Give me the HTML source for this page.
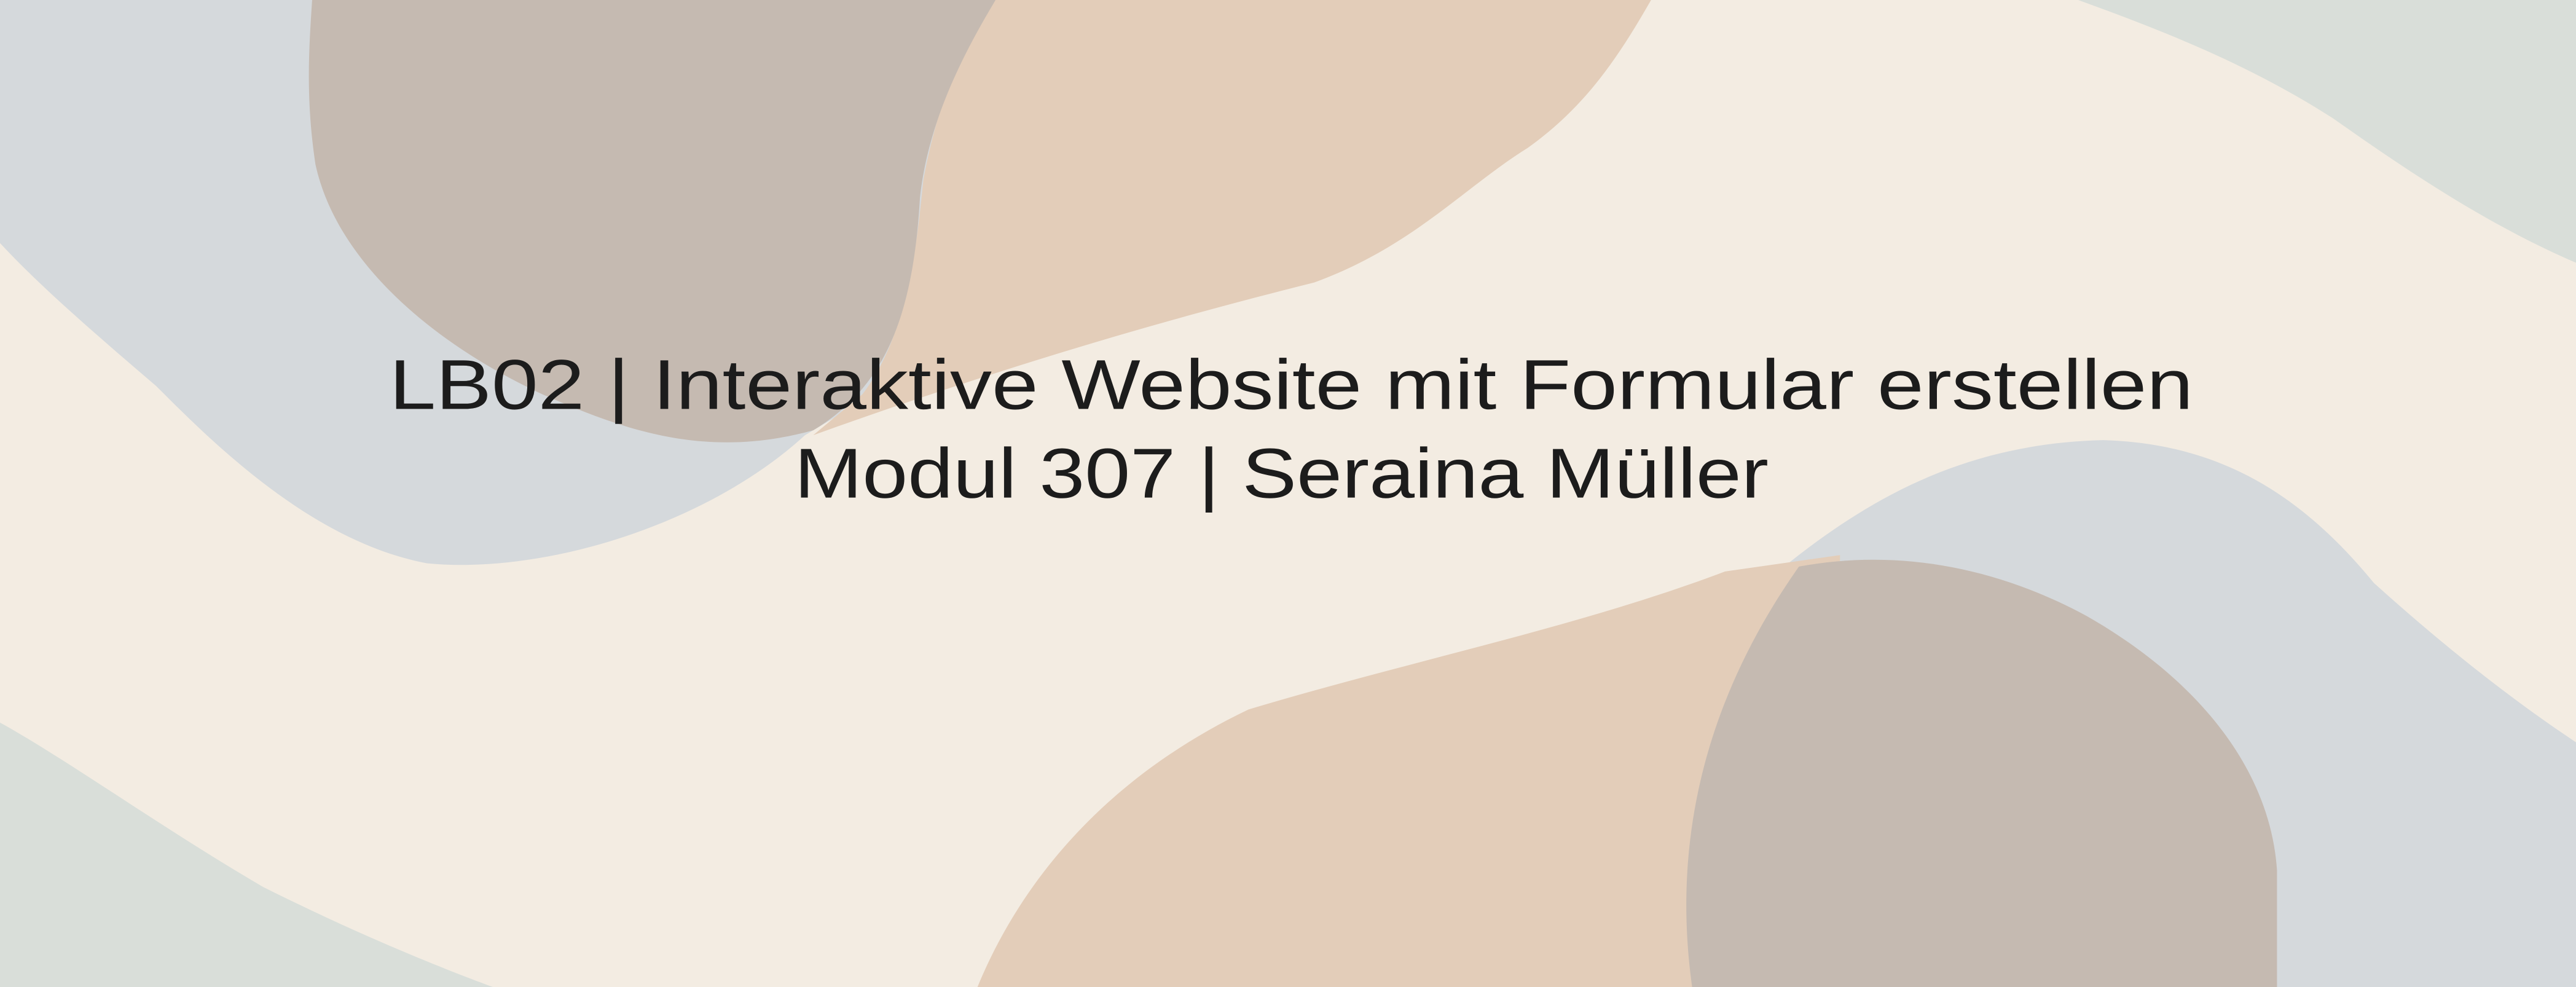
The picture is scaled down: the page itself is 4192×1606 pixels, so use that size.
<!DOCTYPE html>
<html><head><meta charset="utf-8"><style>
html,body{margin:0;padding:0;width:4192px;height:1606px;overflow:hidden;background:#f3ece2}
svg{display:block}
</style></head><body>
<svg width="4192" height="1606" viewBox="0 0 1568 601" preserveAspectRatio="none" xmlns="http://www.w3.org/2000/svg">
<rect width="1568" height="601" fill="#f3ece2"/>
<path d="M1265,0 L1568,0 L1568,160 C1510,135 1460,100 1420,72 C1370,40 1320,20 1265,0 Z" fill="#d9ded9"/>
<path d="M0,0 L620,0 L600,200 L490,265 C430,320 330,350 260,343 C190,330 130,270 95,235 C60,205 25,175 0,148 Z" fill="#d5d9dc"/>
<path d="M600,0 L1005,0 C985,35 965,65 930,90 C890,115 860,150 800,172 C720,192 620,220 495,265 L525,240 C552,205 558,150 562,110 C570,65 585,30 600,0 Z" fill="#e3cdb9"/>
<path d="M190,0 L606,0 C585,35 565,75 560,120 C556,190 540,235 495,262 C430,280 380,262 330,240 C265,210 205,160 192,100 C186,60 188,30 190,0 Z" fill="#c5bab1"/>
<path d="M0,440 C40,462 100,505 160,540 C220,570 270,590 300,601 L0,601 Z" fill="#d9ded9"/>
<path d="M1080,350 C1140,300 1200,270 1280,268 C1350,270 1400,300 1445,355 C1495,400 1535,430 1568,452 L1568,601 L1000,601 Z" fill="#d5d9dc"/>
<path d="M595,601 C620,540 670,475 760,432 C860,402 960,382 1050,348 L1120,338 L1120,601 Z" fill="#e3cdb9"/>
<path d="M1030,601 C1020,530 1028,440 1095,345 C1160,333 1220,348 1270,375 C1340,415 1382,470 1386,530 L1386,601 Z" fill="#c5bab1"/>
<g font-family="Liberation Sans, sans-serif" font-size="43" fill="#1c1c1c" text-anchor="middle">
<text x="786" y="249" textLength="1098" lengthAdjust="spacingAndGlyphs">LB02 | Interaktive Website mit Formular erstellen</text>
<text x="780" y="303" textLength="593" lengthAdjust="spacingAndGlyphs">Modul 307 | Seraina Müller</text>
</g>
</svg>
</body></html>
